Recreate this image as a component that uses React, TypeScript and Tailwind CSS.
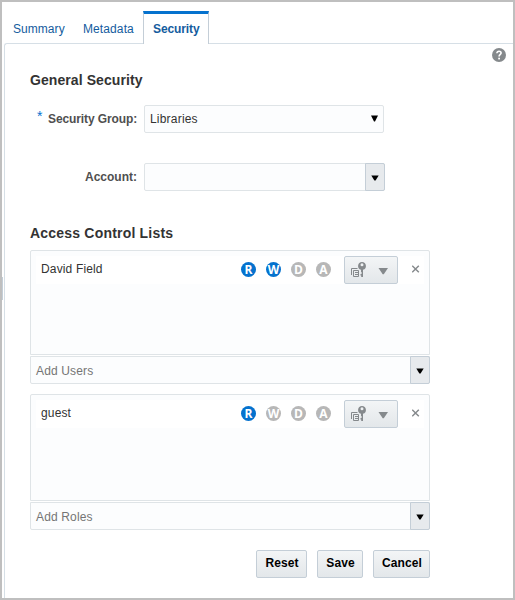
type Permission = "R" | "W" | "D" | "A";

type AccessListProps = {
    name: string;
    granted: Permission[];
    placeholder: string;
    boxHeight: string;
}

const PERMISSIONS: Permission[] = ["R", "W", "D", "A"];

function ArrowDown() {
    return (
        <svg width="8" height="6" viewBox="0 0 8 6" className="block">
            <path d="M0.3 0.4h7.4L4.6 5.6H3.4z" fill="#000" />
        </svg>
    )
}

function HelpIcon() {
    return (
        <svg width="14" height="14" viewBox="0 0 14 14" className="block">
            <circle cx="7" cy="7" r="7" fill="#85898c" />
            <path d="M4.9 5.3C4.9 3.9 5.8 3.3 7 3.3s2.1.7 2.1 1.8C9.1 6.5 7.1 6.5 7.1 8.5" fill="none" stroke="#fff" strokeWidth="1.6" />
            <rect x="6.2" y="9.7" width="1.8" height="1.7" fill="#fff" />
        </svg>
    )
}

function KeyIcon() {
    return (
        <svg width="16" height="16" viewBox="0 0 16 16" className="block">
            <path d="M0.5 13V6.5H6.5" fill="none" stroke="#85898c" />
            <path d="M2.5 8.5h5v6h-5z" fill="none" stroke="#85898c" />
            <path d="M4 10.5h3M4 12.5h3" stroke="#85898c" />
            <path d="M11 0a4 4 0 0 0-1 7.850V10h.6v2H9.500v1.500h.7V15H12V7.850A4 4 0 0 0 11 0zM11 1.200a1.500 1.500 0 0 1 0 3a1.500 1.500 0 0 1 0-3z" fill="#85898c" fillRule="evenodd" />
        </svg>
    )
}

function Badge({ letter, active }: { letter: Permission; active: boolean }) {
    return (
        <span className={`flex size-[15px] items-center justify-center rounded-full font-['Open_Sans',sans-serif] text-[12px] leading-[15px] font-bold text-white ${active ? "bg-[#0572ce]" : "bg-[#b7b7b7]"}`}>
            {letter}
        </span>
    )
}

function ComboButton() {
    return (
        <span className="-my-px -mr-px flex w-[20px] items-center justify-center rounded-r-[2px] border border-[#c4ced7] bg-[#e7eaed] pt-px">
            <ArrowDown />
        </span>
    )
}

function AccessList({ name, granted, placeholder, boxHeight }: AccessListProps) {
    return (
        <div className="w-[400px]">
            <div className={`rounded-t-[2px] border border-[#dfe4e7] bg-[#fcfdfe] px-[5px] pt-[5px] ${boxHeight}`}>
                <div className="flex h-[28px] bg-white pl-[5px]">
                    <span className="w-[200px] pt-[5px] leading-[16px] tracking-[0.15px]">{name}</span>
                    <div className="flex gap-[10px] pt-[6px]">
                        {PERMISSIONS.map((letter) => (
                            <Badge key={letter} letter={letter} active={granted.includes(letter)} />
                        ))}
                    </div>
                    <button className="ml-[13px] flex h-[28px] w-[54px] items-start rounded-[2px] border border-[#c4ced7] bg-linear-to-b from-[#f3f5f6] to-[#e3e7ea] pt-[5px] pl-[6px]">
                        <KeyIcon />
                        <svg width="10" height="7" viewBox="0 0 10 7" className="mt-[6px] ml-[11px] block">
                            <path d="M0.5 0h9.500L5.800 6.300H4.700z" fill="#85898c" />
                        </svg>
                    </button>
                    <svg width="8" height="8" viewBox="0 0 8 8" className="mt-[9px] ml-[14px] block">
                        <path d="M0.2 0.7l6.600 6.600M6.800 0.700L0.200 7.300" stroke="#85898c" strokeWidth="1.500" />
                    </svg>
                </div>
            </div>
            <div className="mt-px flex h-[28px] justify-between rounded-b-[2px] border border-[#dfe4e7] bg-[#fcfdfe] pl-[5px]">
                <span className="leading-[28px] tracking-[0.15px] text-[#757575]">{placeholder}</span>
                <ComboButton />
            </div>
        </div>
    )
}

function ActionButton({ label, width }: { label: string; width: string }) {
    return (
        <button className={`h-[28px] rounded-[2px] border border-[#c4ced7] bg-linear-to-b from-[#f3f5f6] to-[#e3e7ea] pb-[2px] pl-px text-center font-bold tracking-[0.1px] text-black ${width}`}>
            {label}
        </button>
    )
}

export default function App() {
    return (
        <div className="flex h-[600px] w-[515px] flex-col overflow-hidden border-2 border-[#bfbfbf] bg-white font-['Liberation_Sans',Arial,sans-serif] text-[12px] text-[#333]">
            <nav className="flex h-[41px] shrink-0 items-end pl-[11px] text-[#145c9e]">
                <span className="w-[70px] pb-[6px] leading-[16px] tracking-[0.05px]">Summary</span>
                <span className="w-[60px] pb-[6px] leading-[16px] tracking-[0.1px]">Metadata</span>
                <span className="z-10 -mb-px h-[33px] w-[66px] border-x border-t-3 border-x-[#c4ced7] border-t-[#0572ce] bg-white pt-[7px] pl-[9px] leading-[16px] font-bold tracking-[-0.1px]">Security</span>
            </nav>
            <div className="flex grow">
                <div className="mt-[234px] h-[23px] w-px bg-[#c4ced7]" />
                <main className="ml-px flex grow flex-col rounded-tl-[3px] border-t border-l border-[#d6dfe6] pl-[25px]">
                    <div className="flex h-[61px] justify-between pr-[7px]">
                        <h2 className="pt-[27px] text-[14px] leading-[18px] font-bold tracking-[0.08px]">General Security</h2>
                        <div className="pt-[4px]"><HelpIcon /></div>
                    </div>
                    <div className="flex h-[28px]">
                        <span className="w-[18px] pl-[7px] text-[14px] leading-[22px] text-[#0572ce]">*</span>
                        <label className="w-[96px] leading-[28px] font-bold tracking-[-0.11px] text-[#4f4f4f]">Security Group:</label>
                        <div className="flex w-[240px] items-center justify-between rounded-[2px] border border-[#dfe4e7] bg-[#fcfdfe] pr-[5px] pl-[5px]">
                            <span className="tracking-[0.2px]">Libraries</span>
                            <svg width="7" height="7" viewBox="0 0 7 7" className="mb-px block">
                                <path d="M0 0.5h7L4 6.5H3z" fill="#000" />
                            </svg>
                        </div>
                    </div>
                    <div className="mt-[30px] flex h-[28px]">
                        <label className="w-[114px] pr-[7px] text-right leading-[28px] font-bold text-[#4f4f4f]">Account:</label>
                        <div className="flex w-[241px] justify-end rounded-[2px] border border-[#dfe4e7] bg-[#fcfdfe]">
                            <ComboButton />
                        </div>
                    </div>
                    <h2 className="mt-[33px] mb-[8px] text-[14px] leading-[18px] font-bold tracking-[0.2px]">Access Control Lists</h2>
                    <AccessList name="David Field" granted={["R", "W"]} placeholder="Add Users" boxHeight="h-[105px]" />
                    <div className="h-[10px]" />
                    <AccessList name="guest" granted={["R"]} placeholder="Add Roles" boxHeight="h-[107px]" />
                    <div className="mt-[20px] flex w-[400px] justify-end">
                        <ActionButton label="Reset" width="w-[51px]" />
                        <ActionButton label="Save" width="ml-[10px] w-[46px]" />
                        <ActionButton label="Cancel" width="ml-[10px] w-[57px]" />
                    </div>
                </main>
            </div>
        </div>
    )
}
